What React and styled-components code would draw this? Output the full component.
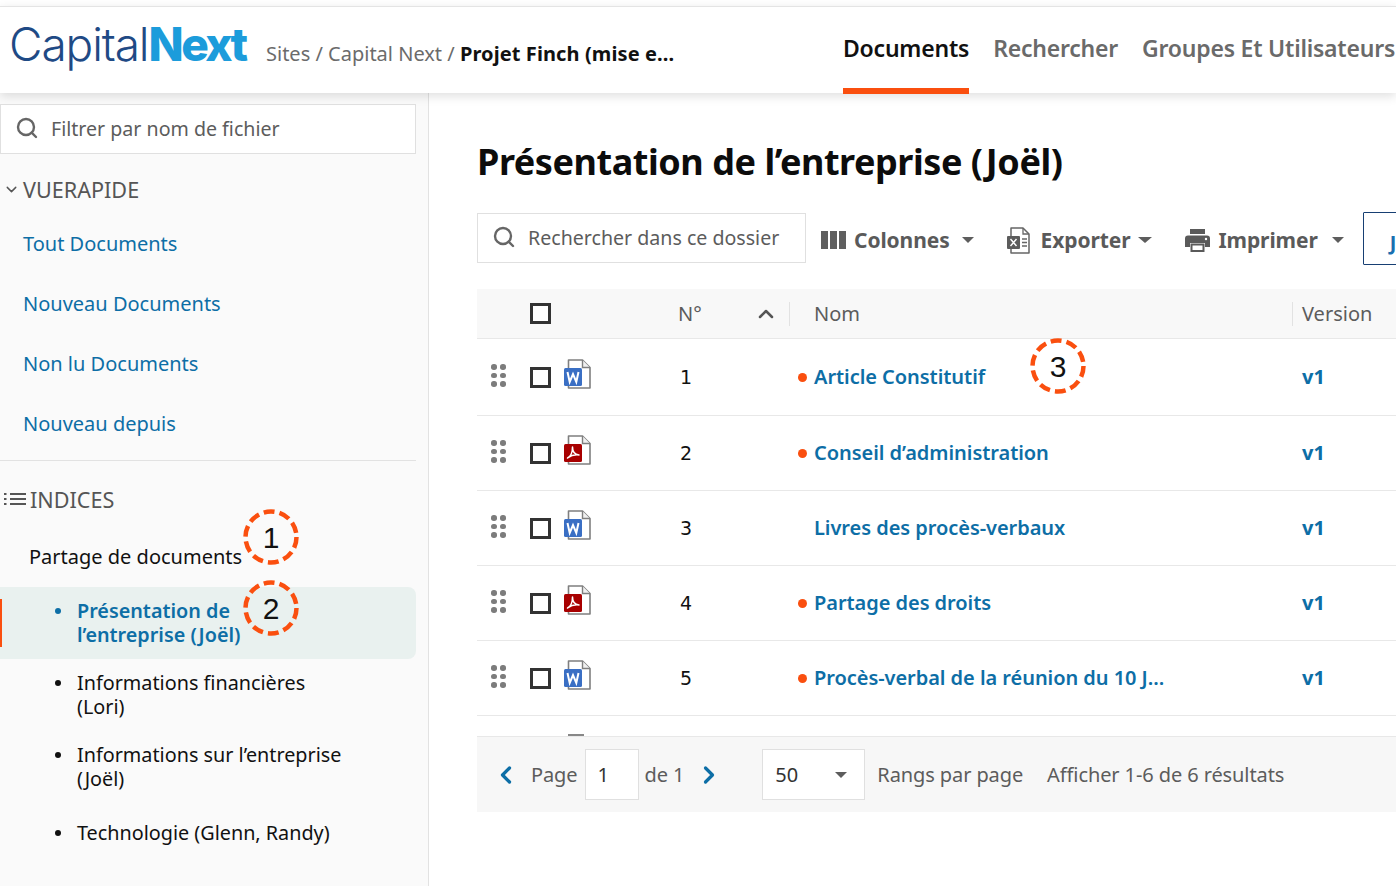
import React from "react";
import styled, { createGlobalStyle } from "styled-components";
import { Search, ChevronDown, ChevronUp, ChevronLeft, ChevronRight } from "lucide-react";

const GlobalStyle = createGlobalStyle`
  html, body {
    margin: 0;
    padding: 0;
    background: #fff;
    font-family: "Noto Sans", "Open Sans", sans-serif;
    overflow: hidden;
  }
  * { box-sizing: border-box; }
`;

const Page = styled.div`
  position: relative;
  width: 1396px;
  height: 886px;
  overflow: hidden;
  padding-top: 6px;
  display: flex;
  flex-direction: column;
`;

const Header = styled.header`
  height: 87px;
  flex: none;
  display: flex;
  align-items: stretch;
  background: #fff;
  border-top: 1.5px solid #e4e4e4;
  box-shadow: 0 3px 10px rgba(0, 0, 0, 0.13);
  position: relative;
  z-index: 2;
  padding-left: 9px;
`;

const Logo = styled.div`
  font-family: "Inter", sans-serif;
  font-size: 46px;
  line-height: 74px;
  letter-spacing: -1.1px;
  width: 257px;
  flex: none;
  color: #1f4a85;
  font-weight: 300;
  white-space: nowrap;
  span { color: #1c9cdb; font-size: 46px; font-weight: 800; letter-spacing: -2.6px; }
`;

const Crumbs = styled.div`
  width: 577px;
  flex: none;
  padding-top: 34px;
  font-size: 20px;
  line-height: 26px;
  color: #6b6b6b;
  white-space: nowrap;
  b { color: #111; font-weight: 700; letter-spacing: 0.1px; }
`;

const Nav = styled.nav`
  display: flex;
  gap: 24px;
  white-space: nowrap;
`;

const NavItem = styled.div`
  height: 87px;
  padding-top: 25px;
  font-size: 23px;
  line-height: 32px;
  font-weight: 600;
  letter-spacing: -0.22px;
  color: ${(p) => (p.$active ? "#111" : "#6a6a6a")};
  border-bottom: 6px solid ${(p) => (p.$active ? "#fa4f0f" : "transparent")};
`;

const Body = styled.div`
  flex: 1;
  display: flex;
  min-height: 0;
`;

const Sidebar = styled.aside`
  width: 429px;
  flex: none;
  background: #fafafa;
  border-right: 1px solid #e2e2e2;
  padding: 11px 12px 0 0;
`;

const SearchBox = styled.div`
  display: flex;
  align-items: center;
  height: 50px;
  width: ${(p) => p.$width}px;
  padding: 0 0 2px ${(p) => p.$pad}px;
  gap: 12px;
  background: #fff;
  border: 1px solid #e0e0e0;
  font-size: 19.6px;
  color: #5c5c5c;
  white-space: nowrap;
  flex: none;
  svg { color: #666; flex: none; }
`;

const SectionTitle = styled.div`
  display: flex;
  align-items: center;
  height: 40px;
  font-size: 21.6px;
  color: #555;
  padding-left: ${(p) => p.$pad}px;
  gap: ${(p) => p.$gap}px;
`;

const QuickView = styled.div`
  padding-top: 15px;
`;

const QuickLinks = styled.div`
  padding-top: 4px;
`;

const SideLink = styled.a`
  display: flex;
  align-items: center;
  height: 60px;
  padding-left: 23px;
  font-size: 20px;
  color: #0d6ea6;
`;

const Divider = styled.div`
  height: 1px;
  background: #e2e2e2;
  margin: 7px 0 18px;
`;

const Tree = styled.div`
  display: flex;
  flex-direction: column;
`;

const TreeRoot = styled.div`
  height: 62px;
  display: flex;
  align-items: center;
  padding: 12px 0 0 29px;
  font-size: 20px;
  color: #111;
`;

const TreeItem = styled.div`
  position: relative;
  display: flex;
  margin-top: ${(p) => p.$gap || 0}px;
  padding: 12px 0 12px 52px;
  font-size: 19.8px;
  line-height: 24px;
  border-radius: 0 8px 8px 0;
  color: ${(p) => (p.$active ? "#0d6ea6" : "#111")};
  font-weight: ${(p) => (p.$active ? 600 : 400)};
  background: ${(p) => (p.$active ? "#e9f1ef" : "transparent")};

  &::before {
    content: "";
    width: 6px;
    height: 6px;
    border-radius: 50%;
    background: currentColor;
    flex: none;
    margin: 9px 16px 0 3px;
  }

  &::after {
    content: "";
    display: ${(p) => (p.$active ? "block" : "none")};
    position: absolute;
    left: 0;
    top: 12px;
    bottom: 12px;
    width: 2px;
    background: #fa4f0f;
  }
`;

const TreeText = styled.div`
  max-width: ${(p) => (p.$narrow ? 200 : 270)}px;
`;

const Main = styled.main`
  flex: 1;
  min-width: 0;
  padding: 44px 0 0 48px;
  overflow: hidden;
  background: #fff;
`;

const Title = styled.h1`
  margin: 0;
  height: 52px;
  font-size: 36px;
  line-height: 50px;
  font-weight: 700;
  color: #0c0c0c;
  letter-spacing: -0.45px;
  white-space: nowrap;
`;

const Toolbar = styled.div`
  display: flex;
  align-items: center;
  height: 54px;
  margin-top: 22px;
  width: 960px;
`;

const ToolButton = styled.div`
  display: flex;
  align-items: center;
  flex: none;
  margin-left: ${(p) => p.$left}px;
  gap: ${(p) => p.$gap}px;
  font-size: 21px;
  font-weight: 700;
  color: #5a5a5a;
  white-space: nowrap;
  height: 50px;
  padding-top: 4px;
  letter-spacing: -0.1px;
`;

const Caret = styled.i`
  display: block;
  flex: none;
  margin-left: ${(p) => p.$left || 0}px;
  border-left: ${(p) => p.$size || 6}px solid transparent;
  border-right: ${(p) => p.$size || 6}px solid transparent;
  border-top: 6px solid #5d5d5d;
`;

const JumpButton = styled.div`
  flex: none;
  width: 60px;
  height: 53px;
  margin-left: 19px;
  border: 1px solid #173f73;
  border-radius: 1px;
  padding: 16px 0 0 26px;
  font-size: 20px;
  font-weight: 700;
  color: #1a6fb0;
`;

const Table = styled.div`
  margin-top: 24px;
  width: 1000px;
`;

const Row = styled.div`
  display: grid;
  grid-template-columns: 53px 34px 114px 112px 503px 1fr;
  align-items: center;
  height: ${(p) => p.$height}px;
  background: ${(p) => (p.$head ? "#f8f8f8" : "#fff")};
  border-bottom: 1px solid #e8e8e8;
  font-size: 20px;
  color: #111;
`;

const HeadCell = styled.div`
  display: flex;
  align-items: center;
  justify-content: space-between;
  height: 24px;
  color: #5c5c5c;
  padding-left: ${(p) => p.$pad || 0}px;
  padding-right: 11px;
  border-right: ${(p) => (p.$divider ? "1px solid #e2e2e2" : "none")};
  white-space: nowrap;
`;

const Grip = styled.div`
  display: grid;
  grid-template-columns: 5px 5px;
  gap: 3px 4px;
  margin: -3px 0 0 14px;
  i { width: 5.5px; height: 5.5px; border-radius: 50%; background: #7c7c7c; display: block; }
`;

const Check = styled.div`
  width: 21px;
  height: 21px;
  border: 3px solid #333;
  background: #fff;
`;

const IconCell = styled.div`
  display: flex;
  margin-top: -6px;
`;

const NumCell = styled.div`
  padding-left: 2px;
  font-family: "DejaVu Sans", sans-serif;
  font-size: 19px;
`;

const NameCell = styled.div`
  display: flex;
  align-items: center;
  font-weight: 600;
  font-size: 20px;
  color: #0d6ea6;
  white-space: nowrap;
  margin-top: -2px;
  letter-spacing: -0.05px;

  &::before {
    content: "";
    width: 9px;
    height: 9px;
    border-radius: 50%;
    background: ${(p) => (p.$dot ? "#fa4f0f" : "transparent")};
    margin: 2px 7px 0 8px;
    flex: none;
  }
`;

const VersionCell = styled.div`
  padding-left: 9px;
  font-weight: 700;
  font-size: 20px;
  color: #0d6ea6;
  margin-top: -2px;
`;

const ClippedRow = styled.div`
  height: 21px;
  overflow: hidden;
  background: #fff;
  padding: 18px 0 0 91px;
  border-bottom: 1px solid #e8e8e8;
`;

const Peek = styled.div`
  width: 16px;
  height: 1.5px;
  background: #888;
`;

const Pager = styled.div`
  display: flex;
  align-items: center;
  width: 919px;
  height: 75px;
  background: #f7f7f7;
  font-size: 20px;
  color: #5c5c5c;
  padding-left: 15px;
  white-space: nowrap;
`;

const PagerArrow = styled.span`
  display: flex;
  flex: none;
  margin-left: ${(p) => p.$left || 0}px;
  color: #0d6ea6;
`;

const PagerText = styled.span`
  margin-left: ${(p) => p.$left}px;
  letter-spacing: -0.1px;
`;

const PagerField = styled.div`
  display: flex;
  align-items: center;
  justify-content: space-between;
  flex: none;
  width: ${(p) => p.$width}px;
  height: 51px;
  margin-left: ${(p) => p.$left}px;
  padding: 0 17px 0 12px;
  background: #fff;
  border: 1px solid #e0e0e0;
  color: #333;
`;

const Marker = styled.div`
  position: absolute;
  left: ${(p) => p.$x - 30}px;
  top: ${(p) => p.$y - 30}px;
  width: 60px;
  height: 60px;
  display: flex;
  align-items: center;
  justify-content: center;
  padding-top: 2px;
  font-family: "Liberation Sans", Arial, sans-serif;
  font-size: 30px;
  color: #111;
  z-index: 3;
  svg { position: absolute; inset: 0; }
`;

const FileIcon = ({ red }) => (
  <svg width="28" height="31" viewBox="0 0 28 31">
    <path d="M4.500 1h14l7.500 7.500V29H4.500z" fill="#fff" stroke="#7f7f7f" strokeWidth="1.600" strokeLinejoin="round" />
    <path d="M18.500 1v7.500H26" fill="#f0f0f0" stroke="#7f7f7f" strokeWidth="1.400" />
    <rect x="0" y="9" width="18" height="18" rx="1.500" fill={red ? "#a80000" : "#3a6fc4"} />
    {red ? (
      <path d="M3.500 23c3-1.500 5-6 5-11 0 5 2 7.500 6.500 8-4-.5-8 .5-11.500 3z" fill="none" stroke="#fff" strokeWidth="1.500" strokeLinejoin="round" />
    ) : (
      <path d="M3.500 13l2.200 10 3.300-8 3.300 8 2.200-10" fill="none" stroke="#fff" strokeWidth="2" />
    )}
  </svg>
);

const ColumnsIcon = () => (
  <svg width="25" height="18" viewBox="0 0 25 18">
    <path d="M0 0h7v18H0zM9 0h7v18H9zM18 0h7v18h-7z" fill="#5f5f5f" />
  </svg>
);

const ExcelIcon = () => (
  <svg width="23" height="27" viewBox="0 0 23 27">
    <path d="M4 1h12l6 6v19H4z" fill="#fff" stroke="#666" strokeWidth="1.500" strokeLinejoin="round" />
    <path d="M16 1v6h6" fill="none" stroke="#666" strokeWidth="1.300" />
    <rect x="0" y="9" width="13" height="13" rx="1" fill="#5c5c5c" />
    <path d="M3.500 12l6 7M9.500 12l-6 7" stroke="#fff" strokeWidth="1.400" />
    <path d="M15 12h5M15 15.500h5M15 19h5" stroke="#666" strokeWidth="1.400" />
  </svg>
);

const PrintIcon = () => (
  <svg width="25" height="23" viewBox="0 0 25 23">
    <path d="M5 0h15v5H5z" fill="#5a5a5a" />
    <path d="M3 6.500h19a3 3 0 0 1 3 3V18h-5v-4H5v4H0V9.500a3 3 0 0 1 3-3z" fill="#5a5a5a" />
    <path d="M6.500 15.500h12V22h-12z" fill="#fff" stroke="#5a5a5a" strokeWidth="2" />
    <circle cx="21" cy="10" r="1.200" fill="#fff" />
  </svg>
);

const ListIcon = () => (
  <svg width="25" height="14" viewBox="0 0 25 14">
    <path d="M8 2h16M8 7h16M8 12h16" stroke="#555" strokeWidth="2" />
    <path d="M2 2h2.500M2 7h2.500M2 12h2.500" stroke="#555" strokeWidth="2" />
  </svg>
);

const DashedRing = () => (
  <svg width="60" height="60" viewBox="0 0 60 60">
    <circle cx="30" cy="30" r="25.500" fill="none" stroke="#fa4f0f" strokeWidth="4.500" strokeDasharray="11 5" />
  </svg>
);

const quickLinks = ["Tout Documents", "Nouveau Documents", "Non lu Documents", "Nouveau depuis"];

const files = [
  { n: 1, name: "Article Constitutif", dot: true, height: 77 },
  { n: 2, name: "Conseil d’administration", dot: true, red: true, height: 75 },
  { n: 3, name: "Livres des procès-verbaux", height: 75 },
  { n: 4, name: "Partage des droits", dot: true, red: true, height: 75 },
  { n: 5, name: "Procès-verbal de la réunion du 10 J...", dot: true, height: 75 },
];

const markers = [
  { label: "1", x: 271, y: 537 },
  { label: "2", x: 271, y: 608 },
  { label: "3", x: 1058, y: 366 },
];

export default function App() {
  return (
    <Page>
      <GlobalStyle />
      <Header>
        <Logo>Capital<span>Next</span></Logo>
        <Crumbs>Sites / Capital Next / <b>Projet Finch (mise e...</b></Crumbs>
        <Nav>
          <NavItem $active>Documents</NavItem>
          <NavItem>Rechercher</NavItem>
          <NavItem>Groupes Et Utilisateurs</NavItem>
        </Nav>
      </Header>
      <Body>
        <Sidebar>
          <SearchBox $width={416} $pad={14}>
            <Search size={24} strokeWidth={2.400} />
            Filtrer par nom de fichier
          </SearchBox>
          <QuickView>
            <SectionTitle $pad={3} $gap={3}>
              <ChevronDown size={17} color="#555" />
              VUERAPIDE
            </SectionTitle>
            <QuickLinks>
              {quickLinks.map((l) => (
                <SideLink key={l}>{l}</SideLink>
              ))}
            </QuickLinks>
          </QuickView>
          <Divider />
          <SectionTitle $pad={2} $gap={3}>
            <ListIcon />
            INDICES
          </SectionTitle>
          <Tree>
            <TreeRoot>Partage de documents</TreeRoot>
            <TreeItem $active $gap={6}><TreeText $narrow>Présentation de l’entreprise (Joël)</TreeText></TreeItem>
            <TreeItem><TreeText>Informations financières (Lori)</TreeText></TreeItem>
            <TreeItem><TreeText>Informations sur l’entreprise (Joël)</TreeText></TreeItem>
            <TreeItem $gap={6}><TreeText>Technologie (Glenn, Randy)</TreeText></TreeItem>
          </Tree>
        </Sidebar>
        <Main>
          <Title>Présentation de l’entreprise (Joël)</Title>
          <Toolbar>
            <SearchBox $width={329} $pad={14}>
              <Search size={24} strokeWidth={2.400} />
              Rechercher dans ce dossier
            </SearchBox>
            <ToolButton $left={15} $gap={8}>
              <ColumnsIcon />
              Colonnes
              <Caret $left={4} />
            </ToolButton>
            <ToolButton $left={33} $gap={11}>
              <ExcelIcon />
              Exporter
              <Caret $left={-4} $size={7} />
            </ToolButton>
            <ToolButton $left={33} $gap={9}>
              <PrintIcon />
              Imprimer
              <Caret $left={5} />
            </ToolButton>
            <JumpButton>J</JumpButton>
          </Toolbar>
          <Table>
            <Row $head $height={50}>
              <span />
              <Check />
              <span />
              <HeadCell $divider>
                N°
                <ChevronUp size={24} color="#555" strokeWidth={2.500} />
              </HeadCell>
              <HeadCell $divider $pad={24}>Nom</HeadCell>
              <HeadCell $pad={9}>Version</HeadCell>
            </Row>
            {files.map((f) => (
              <Row key={f.n} $height={f.height}>
                <Grip><i /><i /><i /><i /><i /><i /></Grip>
                <Check />
                <IconCell><FileIcon red={f.red} /></IconCell>
                <NumCell>{f.n}</NumCell>
                <NameCell $dot={f.dot}>{f.name}</NameCell>
                <VersionCell>v1</VersionCell>
              </Row>
            ))}
            <ClippedRow><Peek /></ClippedRow>
          </Table>
          <Pager>
            <PagerArrow><ChevronLeft size={28} strokeWidth={2.800} /></PagerArrow>
            <PagerText $left={11}>Page</PagerText>
            <PagerField $width={54} $left={7}>1</PagerField>
            <PagerText $left={6}>de 1</PagerText>
            <PagerArrow $left={11}><ChevronRight size={28} strokeWidth={2.800} /></PagerArrow>
            <PagerField $width={103} $left={39}>
              50
              <Caret $size={6} />
            </PagerField>
            <PagerText $left={12}>Rangs par page</PagerText>
            <PagerText $left={24}>Afficher 1-6 de 6 résultats</PagerText>
          </Pager>
        </Main>
      </Body>
      {markers.map((m) => (
        <Marker key={m.label} $x={m.x} $y={m.y}>
          <DashedRing />
          {m.label}
        </Marker>
      ))}
    </Page>
  );
}
